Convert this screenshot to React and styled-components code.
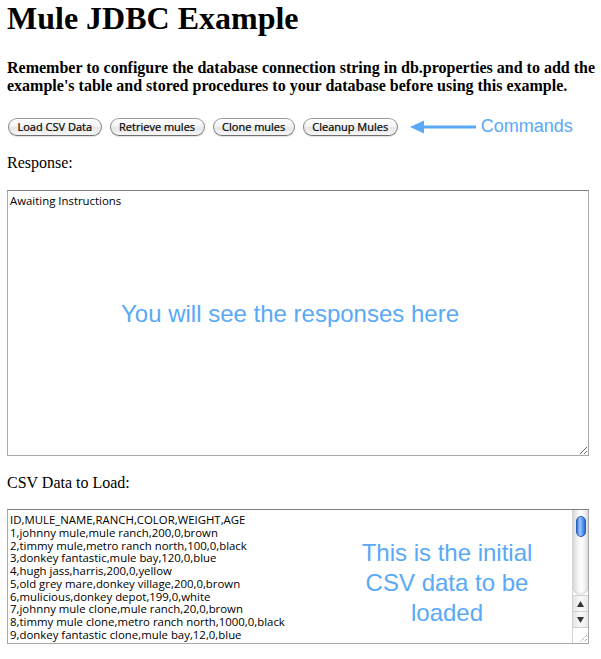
import React from "react";
import styled, { createGlobalStyle } from "styled-components";

const BLUE = "#5aa9f7";

const GlobalStyle = createGlobalStyle`
  html, body { margin: 0; padding: 0; background: #ffffff; }
  body { font-family: "Liberation Serif", "Times New Roman", serif; color: #000; }
`;

const Page = styled.div`
  padding: 0 0 0 7px;
  display: flex;
  flex-direction: column;
  align-items: flex-start;
`;

const Title = styled.h1`
  margin: 0 0 22px;
  font: bold 32px/37px "Liberation Serif", "Times New Roman", serif;
`;

const Notice = styled.p`
  margin: 0;
  font: bold 16px/18.4px "Liberation Serif", "Times New Roman", serif;
`;

const CommandBar = styled.div`
  margin: 22px 0 0 1px;
  height: 18px;
  display: flex;
  align-items: center;
  gap: 8px;
`;

const CommandButton = styled.button`
  height: 18px;
  box-sizing: border-box;
  padding: 0 8.5px;
  border: 1px solid #8a8a8a;
  border-top-color: #9a9a9a;
  border-bottom-color: #6f6f6f;
  border-radius: 9px;
  background: linear-gradient(#ffffff 0%, #f4f4f4 45%, #e6e6e6 55%, #f6f6f6 100%);
  box-shadow: 0 1px 1px rgba(0, 0, 0, 0.12);
  font: 11px/16px "Open Sans", "DejaVu Sans", sans-serif;
  color: #000;
  white-space: nowrap;
  cursor: pointer;
  -webkit-text-stroke: 0.2px #000;
`;

const Callout = styled.div`
  display: flex;
  align-items: center;
  margin-left: 4px;
  gap: 5px;
  color: ${BLUE};
  font: 18px/21px "Liberation Sans", Arial, sans-serif;
`;

const SectionLabel = styled.div`
  margin: 18.4px 0 17.4px;
  font: 16px/18px "Liberation Serif", "Times New Roman", serif;
`;

const Panel = styled.div`
  position: relative;
  width: 582px;
  height: ${(p) => p.$h}px;
`;

const Area = styled.textarea`
  display: block;
  width: 100%;
  height: 100%;
  box-sizing: border-box;
  margin: 0;
  padding: 4px ${(p) => (p.$scroll ? "18px" : "2px")} 2px 2px;
  border: 1px solid #a8a8a8;
  border-top-color: #7e7e7e;
  font: 11.4px/12.7px "Open Sans", "DejaVu Sans", sans-serif;
  color: #000;
  background: #fff;
  overflow: hidden;
  resize: ${(p) => (p.$scroll ? "none" : "both")};
  outline: none;
`;

const Annotation = styled.div`
  position: absolute;
  top: ${(p) => p.$top}px;
  left: ${(p) => p.$left}px;
  width: ${(p) => p.$w}px;
  color: ${BLUE};
  font: 24px/30px "Liberation Sans", Arial, sans-serif;
  text-align: center;
  pointer-events: none;
`;

const Scrollbar = styled.div`
  position: absolute;
  top: 1px;
  right: 1px;
  bottom: 1px;
  width: 15px;
  display: flex;
  flex-direction: column;
  border-left: 1px solid #d4d4d4;
  background: #fff;
`;

const Track = styled.div`
  flex: 1;
  background: linear-gradient(to right, #d9d9d9 0%, #f2f2f2 30%, #ffffff 55%, #f0f0f0 80%, #dcdcdc 100%);
  border-radius: 0 0 7px 7px;
  box-shadow: inset 0 -2px 2px rgba(0, 0, 0, 0.08);
  padding-top: 6px;
  display: flex;
  justify-content: center;
`;

const Thumb = styled.div`
  width: 10px;
  height: 21px;
  box-sizing: border-box;
  border: 1px solid #2a5fb8;
  border-radius: 6px;
  background: linear-gradient(to right, #2f6fd8 0%, #9fcbff 35%, #6aaaf5 60%, #2a68d0 100%);
`;

const StepButton = styled.div`
  height: 16px;
  box-sizing: border-box;
  border-top: 1px solid #d0d0d0;
  background: linear-gradient(to right, #e4e4e4, #fbfbfb 50%, #e8e8e8);
  display: flex;
  align-items: center;
  justify-content: center;
`;

const Grip = styled.div`
  height: 15px;
  border-top: 1px solid #d0d0d0;
  background: #fff;
  display: flex;
  align-items: flex-end;
  justify-content: flex-end;
`;

const Arrow = () => (
  <svg width="66" height="14" viewBox="0 0 66 14">
    <line x1="10" y1="7" x2="66" y2="7" stroke={BLUE} strokeWidth="3" />
    <polygon points="0,7 14,0.5 14,13.5" fill={BLUE} />
  </svg>
);

const Tri = ({ up }) => (
  <svg width="7" height="6" viewBox="0 0 7 6">
    <polygon points={up ? "3.5,0 7,6 0,6" : "0,0 7,0 3.5,6"} fill="#333" />
  </svg>
);

const GripLines = () => (
  <svg width="10" height="10" viewBox="0 0 10 10">
    <line x1="9" y1="2" x2="2" y2="9" stroke="#777" strokeWidth="1" strokeDasharray="1 1" />
    <line x1="9" y1="6" x2="6" y2="9" stroke="#777" strokeWidth="1" strokeDasharray="1 1" />
  </svg>
);

const csv = [
  "ID,MULE_NAME,RANCH,COLOR,WEIGHT,AGE",
  "1,johnny mule,mule ranch,200,0,brown",
  "2,timmy mule,metro ranch north,100,0,black",
  "3,donkey fantastic,mule bay,120,0,blue",
  "4,hugh jass,harris,200,0,yellow",
  "5,old grey mare,donkey village,200,0,brown",
  "6,mulicious,donkey depot,199,0,white",
  "7,johnny mule clone,mule ranch,20,0,brown",
  "8,timmy mule clone,metro ranch north,1000,0,black",
  "9,donkey fantastic clone,mule bay,12,0,blue",
].join("\n");

const commands = ["Load CSV Data", "Retrieve mules", "Clone mules", "Cleanup Mules"];

export default function App() {
  return (
    <>
      <GlobalStyle />
      <Page>
        <Title>Mule JDBC Example</Title>
        <Notice>
          Remember to configure the database connection string in db.properties and to add the
          example's table and stored procedures to your database before using this example.
        </Notice>
        <CommandBar>
          {commands.map((c) => (
            <CommandButton key={c} type="button">
              {c}
            </CommandButton>
          ))}
          <Callout>
            <Arrow />
            <span>Commands</span>
          </Callout>
        </CommandBar>

        <SectionLabel>Response:</SectionLabel>
        <Panel $h={266}>
          <Area readOnly value="Awaiting Instructions" />
          <Annotation $top={109} $left={0} $w={566}>
            You will see the responses here
          </Annotation>
        </Panel>

        <SectionLabel>CSV Data to Load:</SectionLabel>
        <Panel $h={135}>
          <Area $scroll readOnly value={csv} />
          <Annotation $top={29} $left={340} $w={200}>
            This is the initial
            <br />
            CSV data to be
            <br />
            loaded
          </Annotation>
          <Scrollbar>
            <Track>
              <Thumb />
            </Track>
            <StepButton>
              <Tri up />
            </StepButton>
            <StepButton>
              <Tri />
            </StepButton>
            <Grip>
              <GripLines />
            </Grip>
          </Scrollbar>
        </Panel>
      </Page>
    </>
  );
}
